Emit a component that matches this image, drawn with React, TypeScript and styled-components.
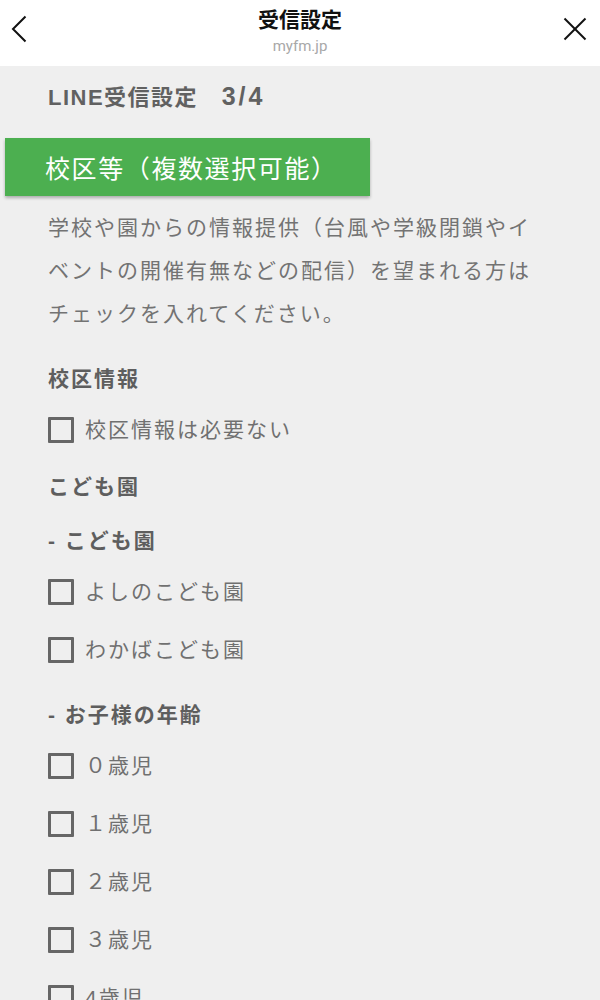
import React from "react";
import styled, { createGlobalStyle } from "styled-components";

const GlobalStyle = createGlobalStyle`
  html, body {
    margin: 0;
    padding: 0;
    background: #efefef;
  }
  body {
    font-family: "Liberation Sans", "Noto Sans CJK JP", sans-serif;
  }
`;

const FONT = `"Liberation Sans", "Noto Sans CJK JP", sans-serif`;

const nurseries = ["よしのこども園", "わかばこども園"];
const ages = ["０歳児", "１歳児", "２歳児", "３歳児", "4歳児", "5歳児"];

function BackIcon() {
  return (
    <svg width="16" height="28" viewBox="0 0 16 28">
      <polyline points="14.5,1.5 2,14 14.5,26.5" fill="none" stroke="#111" strokeWidth="2" />
    </svg>
  );
}

function CloseIcon() {
  return (
    <svg width="24" height="24" viewBox="0 0 24 24">
      <line x1="1.5" y1="1.5" x2="22.5" y2="22.5" stroke="#111" strokeWidth="2" />
      <line x1="22.5" y1="1.5" x2="1.5" y2="22.5" stroke="#111" strokeWidth="2" />
    </svg>
  );
}

function Option({ label }: { label: string }) {
  return (
    <OptionRow>
      <Box type="checkbox" />
      <OptionText>{label}</OptionText>
    </OptionRow>
  );
}

export default function App() {
  return (
    <>
      <GlobalStyle />
      <Header>
        <IconButton $side="left">
          <BackIcon />
        </IconButton>
        <TitleBlock>
          <HeaderTitle>受信設定</HeaderTitle>
          <HeaderUrl>myfm.jp</HeaderUrl>
        </TitleBlock>
        <IconButton $side="right">
          <CloseIcon />
        </IconButton>
      </Header>

      <Content>
        <PageTitle>
          LINE受信設定　<Step>3/4</Step>
        </PageTitle>
        <Banner>校区等（複数選択可能）</Banner>
        <Lead>
          学校や園からの情報提供（台風や学級閉鎖やイベントの開催有無などの配信）を望まれる方はチェックを入れてください。
        </Lead>

        <GroupTitle $gap={22}>校区情報</GroupTitle>
        <Option label="校区情報は必要ない" />

        <GroupTitle $gap={6}>こども園</GroupTitle>
        <GroupTitle $gap={10}>- こども園</GroupTitle>
        {nurseries.map((n) => (
          <Option key={n} label={n} />
        ))}

        <GroupTitle $gap={14}>- お子様の年齢</GroupTitle>
        {ages.map((a) => (
          <Option key={a} label={a} />
        ))}
      </Content>
    </>
  );
}

const Header = styled.header`
  display: grid;
  grid-template-columns: 70px 1fr 70px;
  height: 66px;
  background: #fff;
`;

const IconButton = styled.div<{ $side: "left" | "right" }>`
  display: flex;
  justify-content: ${(p) => (p.$side === "left" ? "flex-start" : "flex-end")};
  align-items: flex-start;
  padding: ${(p) => (p.$side === "left" ? "15px 0 0 11px" : "17px 13px 0 0")};
`;

const TitleBlock = styled.div`
  display: flex;
  flex-direction: column;
  align-items: center;
  padding-top: 7px;
`;

const HeaderTitle = styled.div`
  font-family: ${FONT};
  font-size: 21px;
  line-height: 26px;
  font-weight: 700;
  color: #111;
`;

const HeaderUrl = styled.div`
  font-family: "Roboto", ${FONT};
  font-size: 15px;
  line-height: 18px;
  margin-top: 4px;
  color: #a8a8a8;
`;

const Content = styled.main`
  padding: 18px 48px 40px;
`;

const PageTitle = styled.h1`
  margin: 0;
  height: 28px;
  font-family: ${FONT};
  font-size: 22px;
  line-height: 28px;
  font-weight: 700;
  letter-spacing: 1.5px;
  color: #616161;
`;

const Step = styled.span`
  font-size: 25px;
  line-height: 18px;
  letter-spacing: 3px;
`;

const Banner = styled.div`
  box-sizing: border-box;
  width: 365px;
  height: 58px;
  margin: 26px 0 0 -43px;
  padding-left: 40px;
  display: flex;
  align-items: center;
  background: #4caf50;
  color: #fff;
  font-family: ${FONT};
  font-size: 25px;
  letter-spacing: 1.6px;
  box-shadow: 0 2px 3px rgba(0, 0, 0, 0.28);
`;

const Lead = styled.p`
  margin: 10px 0 0;
  font-family: ${FONT};
  font-size: 21px;
  line-height: 43px;
  letter-spacing: 2px;
  color: #737373;
`;

const GroupTitle = styled.h3<{ $gap: number }>`
  margin: ${(p) => p.$gap}px 0 0;
  font-family: ${FONT};
  font-size: 21px;
  line-height: 44px;
  font-weight: 700;
  letter-spacing: 2px;
  color: #5e5e5e;
`;

const OptionRow = styled.label`
  display: flex;
  align-items: center;
  gap: 11px;
  height: 58px;
`;

const Box = styled.input`
  appearance: none;
  box-sizing: border-box;
  width: 26px;
  height: 26px;
  margin: 0;
  border: 3px solid #666;
  border-radius: 1px;
  background: transparent;
`;

const OptionText = styled.span`
  font-family: ${FONT};
  font-size: 21px;
  line-height: 26px;
  letter-spacing: 2px;
  color: #707070;
`;
